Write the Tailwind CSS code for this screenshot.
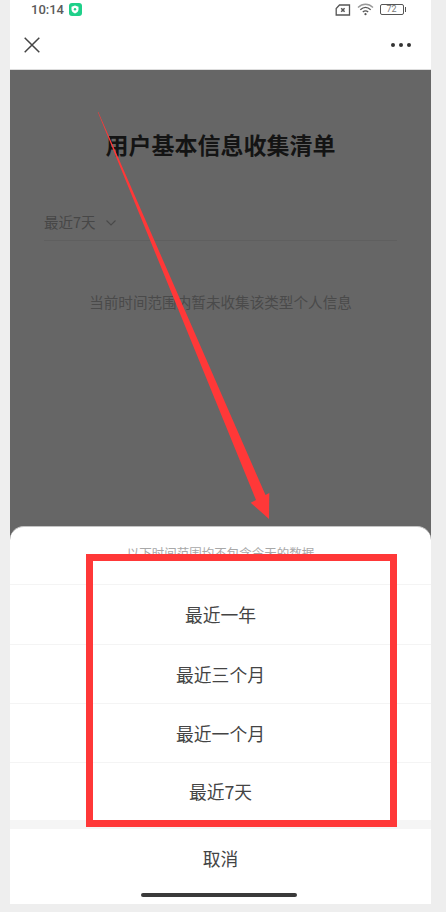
<!DOCTYPE html>
<html lang="zh-CN">
<head>
    <meta charset="UTF-8">
    <meta name="viewport" content="width=device-width, initial-scale=1.0">
    <title>用户基本信息收集清单</title>
    <script src="https://cdn.jsdelivr.net/npm/@tailwindcss/browser@4"></script>
</head>
<body class="bg-[#eeeeee] font-['Noto_Sans_CJK_SC','Noto_Sans',sans-serif]">
    <div class="relative w-[446px] h-[912px] overflow-hidden">
        <!-- Phone screen -->
        <div class="relative ml-[10px] w-[421px] h-[904px] bg-white flex flex-col overflow-hidden">
            <!-- Status bar -->
            <div class="h-[18px] pt-[1px] flex items-center justify-between pl-[21px] pr-[25px]">
                <div class="flex items-center gap-[5px]">
                    <span class="text-[13px] leading-[18px] font-['Roboto',sans-serif] font-medium text-[#5a5a5a]">10:14</span>
                    <span class="w-[13px] h-[13px] rounded-[3px] bg-[#1fd08a] flex items-center justify-center">
                        <svg width="8" height="9" viewBox="0 0 8 9"><path d="M4 0.5 7.5 1.7V4.500C7.500 6.500 6 7.800 4 8.500 2 7.800.5 6.500.5 4.500V1.700Z" fill="#fff"/><circle cx="4" cy="4.200" r="1.200" fill="#1fd08a"/></svg>
                    </span>
                </div>
                <div class="flex items-center gap-[6px]">
                    <svg width="16" height="12" viewBox="0 0 16 12" fill="none" stroke="#555" stroke-width="1.3"><path d="M4.500 1H14.500V11H1.200V4.500Z"/><path d="M6.200 4.200 9.600 7.800M9.600 4.200 6.200 7.800" stroke-width="1.500"/></svg>
                    <svg width="17" height="13" viewBox="0 0 17 13" fill="none" stroke="#555" stroke-width="1.4"><path d="M1 4.500C5.500 .2 11.500 .2 16 4.500" stroke="#999"/><path d="M3.300 6.800C6.500 3.800 10.500 3.800 13.700 6.800"/><path d="M5.800 9C7.500 7.600 9.500 7.600 11.200 9"/><circle cx="8.500" cy="11.200" r="1.100" fill="#555" stroke="none"/></svg>
                    <div class="flex items-center">
                        <span class="w-[24px] h-[11px] rounded-[2px] border border-[#555555] flex items-center justify-center text-[9px] leading-none font-['Roboto',sans-serif] text-[#777777]">72</span>
                        <span class="ml-[1px] w-[1.5px] h-[5px] bg-[#555555]"></span>
                    </div>
                </div>
            </div>

            <!-- Header -->
            <div class="h-[52px] shrink-0 pt-[2px] flex items-center justify-between pl-[14px] pr-[20px] border-b border-[#dddddd]">
                <svg width="16" height="16" viewBox="0 0 16 16" fill="none" stroke="#444" stroke-width="1.5"><path d="M.7.7 15.300 15.300M15.300.7.7 15.300"/></svg>
                <div class="flex gap-[4px]">
                    <span class="w-[4px] h-[4px] rounded-full bg-[#333333]"></span>
                    <span class="w-[4px] h-[4px] rounded-full bg-[#333333]"></span>
                    <span class="w-[4px] h-[4px] rounded-full bg-[#333333]"></span>
                </div>
            </div>

            <!-- Dimmed page -->
            <div class="flex-1 bg-[#666666] px-[34px]">
                <h1 class="mt-[57px] text-center text-[23px] leading-[34px] font-bold text-[#141414]">用户基本信息收集清单</h1>
                <div class="mt-[43px] h-[37px] flex items-center border-b border-[#5f5f5f]">
                    <span class="text-[14.5px] leading-[20px] text-[#474747]">最近7天</span>
                    <svg width="10" height="6" viewBox="0 0 10 6" fill="none" stroke="#4a4a4a" stroke-width="1.1" class="ml-[10px] mt-[2px]"><path d="M.5.5 5 5 9.500.5"/></svg>
                </div>
                <p class="mt-[50px] text-center text-[14.6px] leading-[22px] whitespace-nowrap text-[#4a4a4a]">当前时间范围内暂未收集该类型个人信息</p>
            </div>

            <!-- Bottom sheet -->
            <div class="absolute left-0 right-0 bottom-0 h-[378px] bg-white rounded-t-[14px] border-t border-[#c4c4c4] flex flex-col">
                <div class="h-[58px] shrink-0 pt-[17px] text-center text-[12.5px] leading-[18px] text-[#a8a8a8] border-b border-[#f4f4f4]">以下时间范围均不包含今天的数据</div>
                <div class="h-[60px] shrink-0 flex items-center justify-center text-[17.8px] text-[#444444] border-b border-[#f4f4f4]">最近一年</div>
                <div class="h-[59px] shrink-0 flex items-center justify-center text-[17.8px] text-[#444444] border-b border-[#f4f4f4]">最近三个月</div>
                <div class="h-[59px] shrink-0 flex items-center justify-center text-[17.8px] text-[#444444] border-b border-[#f4f4f4]">最近一个月</div>
                <div class="h-[57px] shrink-0 flex items-center justify-center text-[17.8px] text-[#444444]">最近7天</div>
                <div class="h-[9px] shrink-0 bg-[#f5f5f5]"></div>
                <div class="flex-1 relative">
                    <div class="h-[59px] flex items-center justify-center text-[17.8px] text-[#444444]">取消</div>
                    <div class="absolute left-[131px] bottom-[7px] w-[156px] h-[4px] rounded-full bg-[#3a3a3a]"></div>
                </div>
            </div>
        </div>

        <!-- Red annotations on top of the screenshot -->
        <div class="absolute left-[86px] top-[554px] w-[311px] h-[273px] border-[7px] border-[#ff3838]"></div>
        <svg class="absolute left-0 top-0" width="446" height="912" viewBox="0 0 446 912">
            <path d="M97.800 112 98.300 112 265.500 495 269.300 493 269 519 250.700 502.700 256 500Z" fill="#ff3838"/>
        </svg>
    </div>
</body>
</html>
